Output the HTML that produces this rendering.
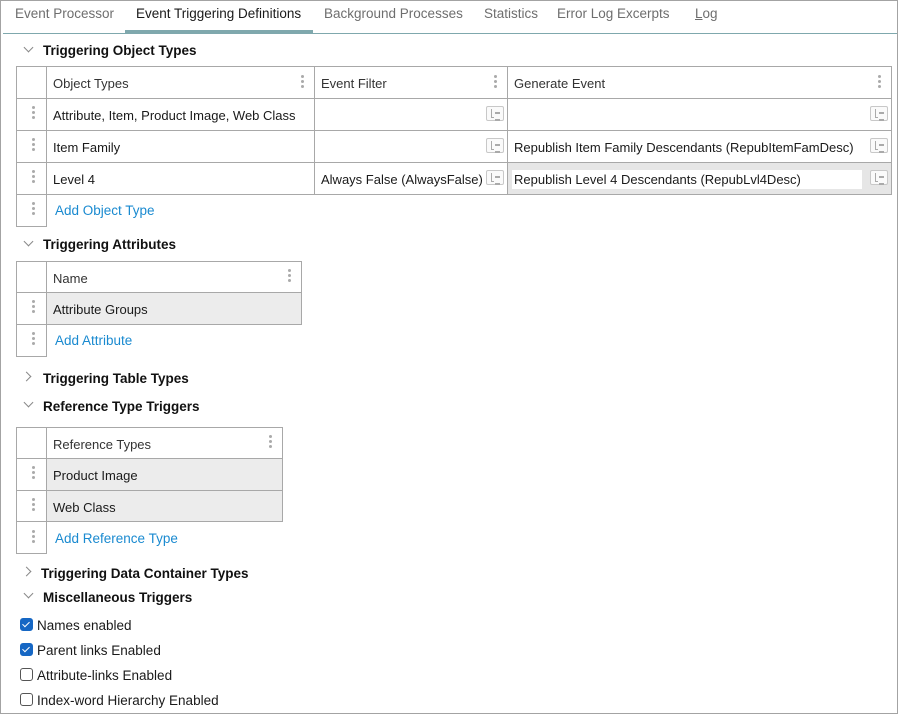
<!DOCTYPE html>
<html><head><meta charset="utf-8"><style>
*{margin:0;padding:0;box-sizing:border-box}
body{width:898px;height:714px;position:relative;background:#fff;font-family:"Liberation Sans",sans-serif;font-size:13px;color:#1a1a1a;overflow:hidden}
.frame{position:absolute;left:0;top:0;width:898px;height:714px;border:1px solid #a3a3a3}
.a{position:absolute}
.tab{position:absolute;top:6px;color:#6e6e6e;font-size:13.5px;white-space:nowrap}
.h{position:absolute;font-weight:bold;font-size:13.5px;color:#111;white-space:nowrap}
.chev{position:absolute;width:7px;height:7px;border-right:1.3px solid #888;border-bottom:1.3px solid #888}
.down{transform:rotate(45deg)}
.right{transform:rotate(-45deg)}
.c{position:absolute;border:1px solid #a8a8a8;white-space:nowrap;padding-left:6px;padding-top:2px;display:flex;align-items:center}
.dots{position:absolute;width:3px}
.dots i{display:block;width:3px;height:3px;border-radius:50%;background:#aaa;margin-bottom:2px}
.ic{position:absolute;width:18px;height:15px;border:1px solid #c8c8c8;border-radius:2px;background:#fafafa}
.ic:before{content:"";position:absolute;left:4px;top:2px;width:2px;height:8px;border-left:1px solid #aaa;border-bottom:1px solid #aaa}
.ic:after{content:"";position:absolute;left:8px;top:5px;width:5px;height:5px;border-top:2px solid #aaa;border-bottom:2px solid #aaa}
.link{color:#1a8ad0}
.cb{position:absolute;left:20px;width:13px;height:13px;border:1px solid #555;border-radius:3px;background:#fff}
.cb.on{background:#1667c4;border-color:#1667c4}
.cb.on:after{content:"";position:absolute;left:3px;top:1px;width:3px;height:6px;border-right:1.5px solid #fff;border-bottom:1.5px solid #fff;transform:rotate(45deg)}
.cl{position:absolute;left:37px;font-size:13.5px;white-space:nowrap}
</style></head><body>
<div class="frame"></div>
<div class="tab" style="left:15px">Event Processor</div>
<div class="tab" style="left:136px;color:#1a1a1a">Event Triggering Definitions</div>
<div class="tab" style="left:324px">Background Processes</div>
<div class="tab" style="left:484px">Statistics</div>
<div class="tab" style="left:557px">Error Log Excerpts</div>
<div class="tab" style="left:695px"><u>L</u>og</div>
<div class="a" style="left:3px;top:33px;width:894px;height:1px;background:#7fa8ad"></div>
<div class="a" style="left:125px;top:30px;width:188px;height:3px;background:#7fa8ad"></div>

<div class="chev down" style="left:25px;top:44px"></div>
<div class="h" style="left:43px;top:43px">Triggering Object Types</div>

<div class="c" style="left:16px;top:66px;width:31px;height:33px"></div>
<div class="c" style="left:46px;top:66px;width:269px;height:33px;color:#333">Object Types</div>
<div class="c" style="left:314px;top:66px;width:194px;height:33px;color:#333">Event Filter</div>
<div class="c" style="left:507px;top:66px;width:385px;height:33px;color:#333">Generate Event</div>
<div class="dots" style="left:301px;top:75px"><i></i><i></i><i></i></div>
<div class="dots" style="left:494px;top:75px"><i></i><i></i><i></i></div>
<div class="dots" style="left:878px;top:75px"><i></i><i></i><i></i></div>

<div class="c" style="left:16px;top:98px;width:31px;height:33px"></div>
<div class="c" style="left:46px;top:98px;width:269px;height:33px">Attribute, Item, Product Image, Web Class</div>
<div class="c" style="left:314px;top:98px;width:194px;height:33px"></div>
<div class="c" style="left:507px;top:98px;width:385px;height:33px"></div>
<div class="c" style="left:16px;top:130px;width:31px;height:33px"></div>
<div class="c" style="left:46px;top:130px;width:269px;height:33px">Item Family</div>
<div class="c" style="left:314px;top:130px;width:194px;height:33px"></div>
<div class="c" style="left:507px;top:130px;width:385px;height:33px">Republish Item Family Descendants (RepubItemFamDesc)</div>
<div class="c" style="left:16px;top:162px;width:31px;height:33px"></div>
<div class="c" style="left:46px;top:162px;width:269px;height:33px">Level 4</div>
<div class="c" style="left:314px;top:162px;width:194px;height:33px">Always False (AlwaysFalse)</div>
<div class="c" style="left:507px;top:162px;width:385px;height:33px;background:#e6e6e6"><span style="background:#fff;width:350px;margin-left:-2px;padding:2px 0 2px 2px">Republish Level 4 Descendants (RepubLvl4Desc)</span></div>
<div class="c" style="left:16px;top:194px;width:31px;height:33px"></div>
<div class="a link" style="left:55px;top:203px;font-size:13.5px">Add Object Type</div>
<div class="dots" style="left:32px;top:106px"><i></i><i></i><i></i></div>
<div class="dots" style="left:32px;top:138px"><i></i><i></i><i></i></div>
<div class="dots" style="left:32px;top:170px"><i></i><i></i><i></i></div>
<div class="dots" style="left:32px;top:202px"><i></i><i></i><i></i></div>
<div class="ic" style="left:486px;top:106px"></div>
<div class="ic" style="left:870px;top:106px"></div>
<div class="ic" style="left:486px;top:138px"></div>
<div class="ic" style="left:870px;top:138px"></div>
<div class="ic" style="left:486px;top:170px"></div>
<div class="ic" style="left:870px;top:170px"></div>

<div class="chev down" style="left:25px;top:238px"></div>
<div class="h" style="left:43px;top:237px">Triggering Attributes</div>
<div class="c" style="left:16px;top:261px;width:31px;height:32px"></div>
<div class="c" style="left:46px;top:261px;width:256px;height:32px;color:#333">Name</div>
<div class="dots" style="left:288px;top:269px"><i></i><i></i><i></i></div>
<div class="c" style="left:16px;top:292px;width:31px;height:33px"></div>
<div class="c" style="left:46px;top:292px;width:256px;height:33px;background:#ececec">Attribute Groups</div>
<div class="c" style="left:16px;top:324px;width:31px;height:33px"></div>
<div class="a link" style="left:55px;top:333px;font-size:13.5px">Add Attribute</div>
<div class="dots" style="left:32px;top:300px"><i></i><i></i><i></i></div>
<div class="dots" style="left:32px;top:332px"><i></i><i></i><i></i></div>

<div class="chev right" style="left:23px;top:373px"></div>
<div class="h" style="left:43px;top:371px">Triggering Table Types</div>
<div class="chev down" style="left:25px;top:399px"></div>
<div class="h" style="left:43px;top:399px">Reference Type Triggers</div>
<div class="c" style="left:16px;top:427px;width:31px;height:32px"></div>
<div class="c" style="left:46px;top:427px;width:237px;height:32px;color:#333">Reference Types</div>
<div class="dots" style="left:269px;top:435px"><i></i><i></i><i></i></div>
<div class="c" style="left:16px;top:458px;width:31px;height:33px"></div>
<div class="c" style="left:46px;top:458px;width:237px;height:33px;background:#ececec">Product Image</div>
<div class="c" style="left:16px;top:490px;width:31px;height:32px"></div>
<div class="c" style="left:46px;top:490px;width:237px;height:32px;background:#ececec">Web Class</div>
<div class="c" style="left:16px;top:521px;width:31px;height:33px"></div>
<div class="a link" style="left:55px;top:531px;font-size:13.5px">Add Reference Type</div>
<div class="dots" style="left:32px;top:466px"><i></i><i></i><i></i></div>
<div class="dots" style="left:32px;top:498px"><i></i><i></i><i></i></div>
<div class="dots" style="left:32px;top:530px"><i></i><i></i><i></i></div>

<div class="chev right" style="left:23px;top:568px"></div>
<div class="h" style="left:41px;top:566px">Triggering Data Container Types</div>
<div class="chev down" style="left:25px;top:590px"></div>
<div class="h" style="left:43px;top:590px">Miscellaneous Triggers</div>

<div class="cb on" style="top:618px"></div><div class="cl" style="top:618px">Names enabled</div>
<div class="cb on" style="top:643px"></div><div class="cl" style="top:643px">Parent links Enabled</div>
<div class="cb" style="top:668px"></div><div class="cl" style="top:668px">Attribute-links Enabled</div>
<div class="cb" style="top:693px"></div><div class="cl" style="top:693px">Index-word Hierarchy Enabled</div>
</body></html>
